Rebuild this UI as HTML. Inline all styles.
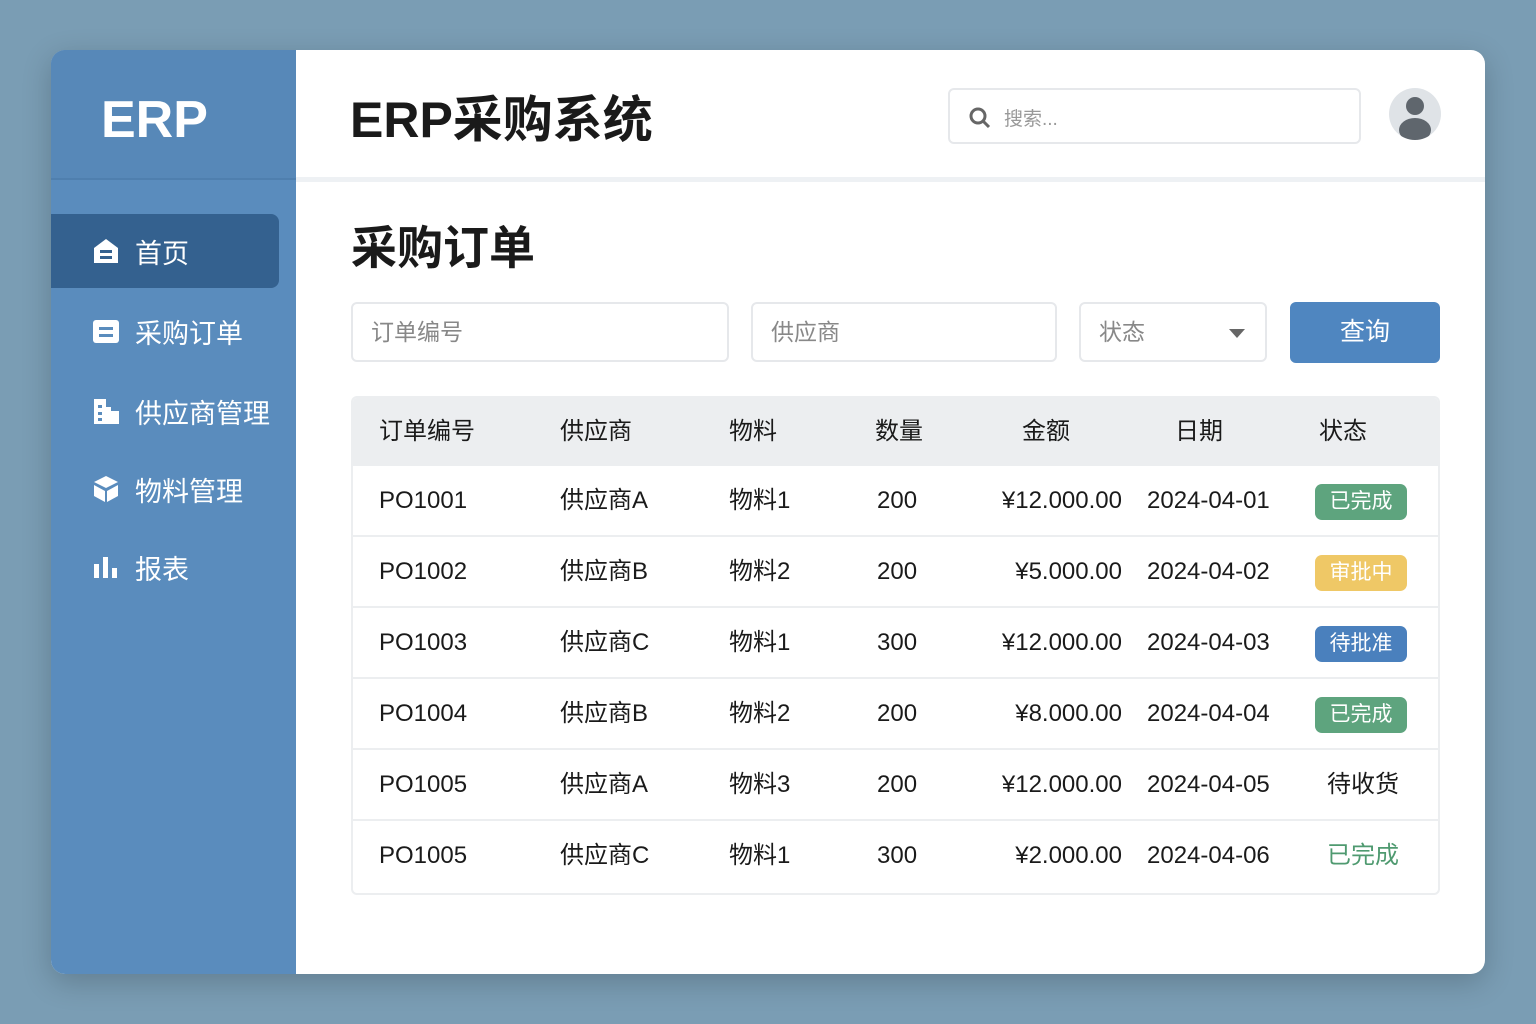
<!DOCTYPE html>
<html><head><meta charset="utf-8"><style>
*{margin:0;padding:0;box-sizing:border-box}
body{width:1536px;height:1024px;background:#7a9db4;font-family:"Liberation Sans","Noto Sans CJK SC",sans-serif;position:relative;overflow:hidden}
.card{position:absolute;left:51px;top:50px;width:1434px;height:924px;border-radius:14px;overflow:hidden;background:#fff;box-shadow:0 8px 30px rgba(0,0,0,.2)}
.side{position:absolute;left:0;top:0;width:245px;height:924px;background:#5a8cbd}
.logo{height:130px;border-bottom:2px solid #4f7fae;color:#fff;font-size:52px;font-weight:bold;padding:40px 0 0 50px;background:#5788b8}
.nav{position:absolute;left:0;width:228px;height:74px;color:#fff;font-size:27px;display:flex;align-items:center;padding-left:40px}
.nav.act{background:#34618f;border-radius:0 8px 8px 0}
.nav svg{width:30px;height:30px;margin-right:14px;fill:#fff}
.head{position:absolute;left:245px;top:0;right:0;height:132px;border-bottom:5px solid #eef1f4}
.title{position:absolute;left:54px;top:0;height:140px;line-height:140px;font-size:50px;font-weight:bold;color:#1a1a1a}
.search{position:absolute;left:652px;top:38px;width:413px;height:56px;border:2px solid #e6e8eb;border-radius:6px;color:#999;font-size:19px;padding:14px 0 0 54px}
.avatar{position:absolute;left:1093px;top:38px;width:52px;height:52px;border-radius:50%;background:#dfe3e7;overflow:hidden}
h2{position:absolute;left:300px;top:162px;font-size:46px;color:#1a1a1a}
.inp{position:absolute;top:252px;height:60px;border:2px solid #e6e8eb;border-radius:6px;color:#888;font-size:23px;line-height:56px;padding-left:18px}
.btn{position:absolute;left:1239px;top:252px;width:150px;height:61px;background:#4f86c0;border-radius:6px;color:#fff;font-size:25px;text-align:center;line-height:61px}
.tbl{position:absolute;left:300px;top:346px;width:1089px;height:499px;border:2px solid #eceef0;border-radius:6px;overflow:hidden}
.row{position:absolute;left:0;width:1089px;height:71px;border-bottom:2px solid #eceef0;font-size:24px;color:#1a1a1a}
.row span{position:absolute;top:0;line-height:70px;height:70px}
.hr{background:#eceef0;height:68px;top:0}
.hr span{line-height:68px;height:68px}
.badge{position:absolute;left:962px;top:18px;width:92px;height:36px;border-radius:7px;color:#fff;font-size:21px;text-align:center;line-height:36px}
</style></head><body>
<div class="card">
<div class="side">
<div class="logo">ERP</div>
<div class="nav act" style="top:164px"><svg viewBox="0 0 30 30"><path d="M15 3L3 12v15h24V12z"/><rect x="9" y="14" width="12" height="3" fill="#34618f"/><rect x="9" y="20" width="12" height="3" fill="#34618f"/></svg>首页</div>
<div class="nav" style="top:244px"><svg viewBox="0 0 30 30"><rect x="2" y="4" width="26" height="23" rx="3"/><rect x="8" y="11" width="14" height="3" fill="#5a8cbd"/><rect x="8" y="18" width="14" height="3" fill="#5a8cbd"/></svg>采购订单</div>
<div class="nav" style="top:324px"><svg viewBox="0 0 30 30"><path d="M3 3h12v8h5v4h8v13H3z"/><rect x="7" y="9" width="4" height="3" fill="#5a8cbd"/><rect x="7" y="16" width="4" height="3" fill="#5a8cbd"/><rect x="7" y="22" width="4" height="3" fill="#5a8cbd"/></svg>供应商管理</div>
<div class="nav" style="top:402px"><svg viewBox="0 0 30 30"><path d="M15 2L3 8l12 6 12-6z"/><path d="M3 11v11l11 6V17z"/><path d="M27 11v11l-11 6V17z"/></svg>物料管理</div>
<div class="nav" style="top:480px"><svg viewBox="0 0 30 30"><rect x="3" y="12" width="5" height="14"/><rect x="12" y="5" width="5" height="21"/><rect x="21" y="16" width="5" height="10"/></svg>报表</div>
</div>
<div class="head">
<div class="title">ERP采购系统</div>
<div class="search"><svg style="position:absolute;left:18px;top:16px" width="24" height="24" viewBox="0 0 24 24"><circle cx="10" cy="10" r="7" fill="none" stroke="#666" stroke-width="3"/><path d="M15 15l6 6" stroke="#666" stroke-width="3"/></svg>搜索...</div>
<div class="avatar"><div style="position:absolute;left:17px;top:9px;width:18px;height:18px;border-radius:50%;background:#5f666d"></div><div style="position:absolute;left:10px;top:30px;width:32px;height:24px;border-radius:50%;background:#5f666d"></div></div>
</div>
<h2>采购订单</h2>
<div class="inp" style="left:300px;width:378px">订单编号</div>
<div class="inp" style="left:700px;width:306px">供应商</div>
<div class="inp" style="left:1028px;width:188px">状态<div style="position:absolute;left:148px;top:25px;border:8px solid transparent;border-top:9px solid #666;border-bottom:0"></div></div>
<div class="btn">查询</div>
<div class="tbl">
<div class="row hr"><span style="left:26px">订单编号</span><span style="left:207px">供应商</span><span style="left:376px">物料</span><span style="left:522px">数量</span><span style="left:669px">金额</span><span style="left:822px">日期</span><span style="left:966px">状态</span></div>
<div class="row" style="top:68px"><span style="left:26px">PO1001</span><span style="left:207px">供应商A</span><span style="left:376px">物料1</span><span style="left:524px">200</span><span style="right:320px">¥12.000.00</span><span style="left:794px">2024-04-01</span><div class="badge" style="background:#5ea47e">已完成</div></div>
<div class="row" style="top:139px"><span style="left:26px">PO1002</span><span style="left:207px">供应商B</span><span style="left:376px">物料2</span><span style="left:524px">200</span><span style="right:320px">¥5.000.00</span><span style="left:794px">2024-04-02</span><div class="badge" style="background:#efc866">审批中</div></div>
<div class="row" style="top:210px"><span style="left:26px">PO1003</span><span style="left:207px">供应商C</span><span style="left:376px">物料1</span><span style="left:524px">300</span><span style="right:320px">¥12.000.00</span><span style="left:794px">2024-04-03</span><div class="badge" style="background:#4a80bd">待批准</div></div>
<div class="row" style="top:281px"><span style="left:26px">PO1004</span><span style="left:207px">供应商B</span><span style="left:376px">物料2</span><span style="left:524px">200</span><span style="right:320px">¥8.000.00</span><span style="left:794px">2024-04-04</span><div class="badge" style="background:#5ea47e">已完成</div></div>
<div class="row" style="top:352px"><span style="left:26px">PO1005</span><span style="left:207px">供应商A</span><span style="left:376px">物料3</span><span style="left:524px">200</span><span style="right:320px">¥12.000.00</span><span style="left:794px">2024-04-05</span><span style="left:974px">待收货</span></div>
<div class="row" style="top:423px;border-bottom:0"><span style="left:26px">PO1005</span><span style="left:207px">供应商C</span><span style="left:376px">物料1</span><span style="left:524px">300</span><span style="right:320px">¥2.000.00</span><span style="left:794px">2024-04-06</span><span style="left:974px;color:#4f9a70">已完成</span></div>
</div>
</div>
</body></html>
